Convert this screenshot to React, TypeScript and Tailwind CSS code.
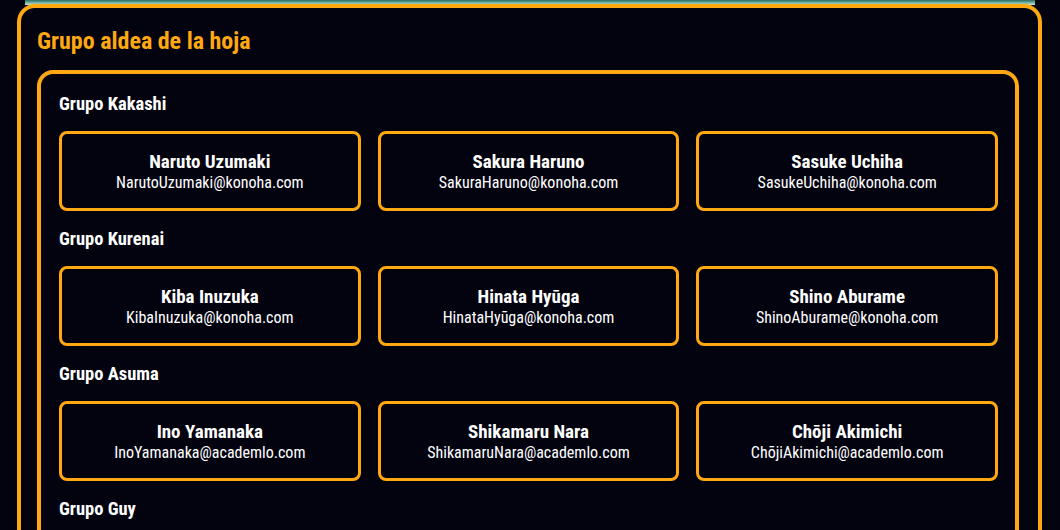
const groups = [
  {
    title: "Grupo Kakashi",
    domain: "konoha.com",
    members: ["Naruto Uzumaki", "Sakura Haruno", "Sasuke Uchiha"],
  },
  {
    title: "Grupo Kurenai",
    domain: "konoha.com",
    members: ["Kiba Inuzuka", "Hinata Hyūga", "Shino Aburame"],
  },
  {
    title: "Grupo Asuma",
    domain: "academlo.com",
    members: ["Ino Yamanaka", "Shikamaru Nara", "Chōji Akimichi"],
  },
  {
    title: "Grupo Guy",
    domain: "academlo.com",
    members: ["Rock Lee", "Neji Hyūga", "Tenten"],
  },
];

function MemberCard({name, domain}: {name: string; domain: string}) {
  return (
    <div className="h-[80px] pt-[2px] rounded-[8px] border-[3px] border-[#ffa812] flex flex-col items-center justify-center">
      <h4 className="text-[19px] leading-[21px] font-bold text-white">{name}</h4>
      <p className="text-[16px] leading-[21px] text-white">
        {name.replace(/ /g, "")}@{domain}
      </p>
    </div>
  );
}

export default function App() {
  return (
    <div className="min-h-[530px] bg-[#03030f] font-['Roboto',sans-serif] font-stretch-condensed">
      <div className="mx-[25px] h-[5px] bg-gradient-to-b from-[#1f6d64] to-[#c4eedb]" />
      <div className="ml-[17px] w-[1025px] -mt-[1px] rounded-[18px] border-4 border-[#ffa812] px-4 pt-[18px]">
        <h2 className="text-[24px] leading-[30px] font-bold text-[#ffa812] mb-[14px]">
          Grupo aldea de la hoja
        </h2>
        <div className="w-[982px] rounded-[16px] border-4 border-[#ffa812] pl-[18px] pr-[17px] pt-[18px] pb-4">
          {groups.map((g) => (
            <section key={g.title} className="mb-4">
              <h3 className="text-[18.5px] leading-[24px] font-bold text-white mb-[15px]">{g.title}</h3>
              <div className="grid grid-cols-3 gap-[17px]">
                {g.members.map((m) => (
                  <MemberCard key={m} name={m} domain={g.domain} />
                ))}
              </div>
            </section>
          ))}
        </div>
      </div>
    </div>
  );
}
